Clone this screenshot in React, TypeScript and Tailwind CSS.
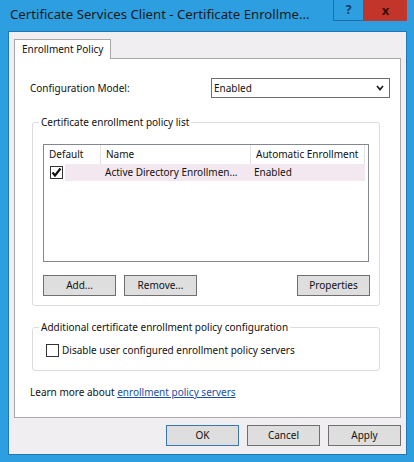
import React from "react";

const font = { fontFamily: '"Noto Sans", "Open Sans", sans-serif' };

function Btn({ children, primary, className = "" }: { children: React.ReactNode; primary?: boolean; className?: string }) {
  return (
    <button
      className={`h-[21px] w-[73px] border bg-[#dedede] text-[10px] text-[#111] ${
        primary ? "border-[#3877b4]" : "border-[#6f6f6f]"
      } ${className}`}
    >
      {children}
    </button>
  );
}

function Check({ checked }: { checked?: boolean }) {
  return (
    <span className="flex h-[13px] w-[13px] shrink-0 items-center justify-center border border-[#333] bg-white">
      {checked && (
        <svg width="11" height="11" viewBox="0 0 11 11">
          <path d="M1.5 5.5 L4 8.5 L9.5 1.5" fill="none" stroke="#111" strokeWidth="2.2" />
        </svg>
      )}
    </span>
  );
}

export default function App() {
  return (
    <div style={font} className="flex h-[462px] w-[414px] flex-col whitespace-nowrap bg-[#2d9fe0] text-[#111]">
      {/* title bar */}
      <div className="flex h-[31px] shrink-0 items-start">
        <div className="pl-[10px] pt-[4px] text-[13.2px] leading-[20px] text-[#1a1a1a]">
          Certificate Services Client - Certificate Enrollme...
        </div>
        <div className="ml-auto mr-[7px] flex">
          <div className="flex h-[21px] w-[31px] items-center justify-center border-x border-b border-[#1d6fa5] bg-[#2d9fe0] text-[12px] font-bold text-[#103a5c]">
            ?
          </div>
          <div className="flex h-[21px] w-[43px] items-center justify-center bg-[#c2352b] text-[13px] font-bold text-[#3a0d0a]">
            x
          </div>
        </div>
      </div>

      {/* client area */}
      <div className="mx-[7px] ml-[8px] flex flex-1 flex-col border border-[#1f78b3] bg-[#f1eef2] px-[5px] pt-[7px] pb-[7px]">
        {/* tab strip */}
        <div className="flex">
          <div className="relative z-10 -mb-px h-[20px] border border-b-0 border-[#a8a8a8] bg-white px-[7px] text-[10px] leading-[19px]">
            Enrollment Policy
          </div>
        </div>
        {/* tab panel */}
        <div className="flex h-[360px] flex-col border border-[#a8a8a8] bg-white px-[15px] pt-[19px] text-[10px]">
          <div className="flex items-center">
            <span className="leading-[20px]">Configuration Model:</span>
            <div className="mr-[-5px] ml-auto flex h-[20px] w-[179px] items-center border border-[#6e6e6e] bg-white pl-[2px] pr-[5px]">
              <span>Enabled</span>
              <svg className="ml-auto" width="8" height="6" viewBox="0 0 8 6">
                <path d="M1 1 L4 4.5 L7 1" fill="none" stroke="#222" strokeWidth="1.8" />
              </svg>
            </div>
          </div>

          <fieldset className="mt-[17px] mr-[5px] ml-[2px] rounded-[3px] border border-[#dcdcdc] px-[10px] pb-[9px]">
            <legend className="ml-[-4px] px-[2px] leading-[15px]">Certificate enrollment policy list</legend>
            <div className="mt-[14px] h-[118px] border border-[#828790] bg-white">
              <div className="flex h-[19px] items-stretch">
                <div className="w-[57px] border-r border-[#e3e3e3] pl-[5px] leading-[18px]">Default</div>
                <div className="w-[150px] border-r border-[#e3e3e3] pl-[5px] leading-[18px]">Name</div>
                <div className="w-[114px] border-r border-[#e3e3e3] pl-[5px] leading-[18px]">Automatic Enrollment</div>
              </div>
              <div className="flex h-[17px] items-center">
                <div className="flex w-[21px] justify-center pl-[3px]">
                  <Check checked />
                </div>
                <div className="flex h-full w-[300px] items-center bg-[#f4e8f0]">
                  <span className="w-[188px] pl-[40px]">Active Directory Enrollmen...</span>
                  <span className="pl-[1px]">Enabled</span>
                </div>
              </div>
            </div>
            <div className="mt-[13px] flex">
              <Btn>Add...</Btn>
              <Btn className="ml-[8px]">Remove...</Btn>
              <Btn className="ml-auto mr-[-1px]">Properties</Btn>
            </div>
          </fieldset>

          <fieldset className="mt-[14px] mr-[5px] ml-[2px] rounded-[3px] border border-[#dcdcdc] px-[13px] pb-[12px]">
            <legend className="ml-[-7px] px-[2px] leading-[15px]">Additional certificate enrollment policy configuration</legend>
            <label className="mt-[8px] flex items-center gap-[3px]">
              <Check />
              <span>Disable user configured enrollment policy servers</span>
            </label>
          </fieldset>

          <div className="mt-[14px]">
            Learn more about <span className="text-[#1a4fa3] underline">enrollment policy servers</span>
          </div>
        </div>

        {/* dialog buttons */}
        <div className="mt-[7px] flex justify-end gap-[8px]">
          <Btn primary>OK</Btn>
          <Btn>Cancel</Btn>
          <Btn>Apply</Btn>
        </div>
      </div>
      <div className="h-[7px] shrink-0" />
    </div>
  );
}
